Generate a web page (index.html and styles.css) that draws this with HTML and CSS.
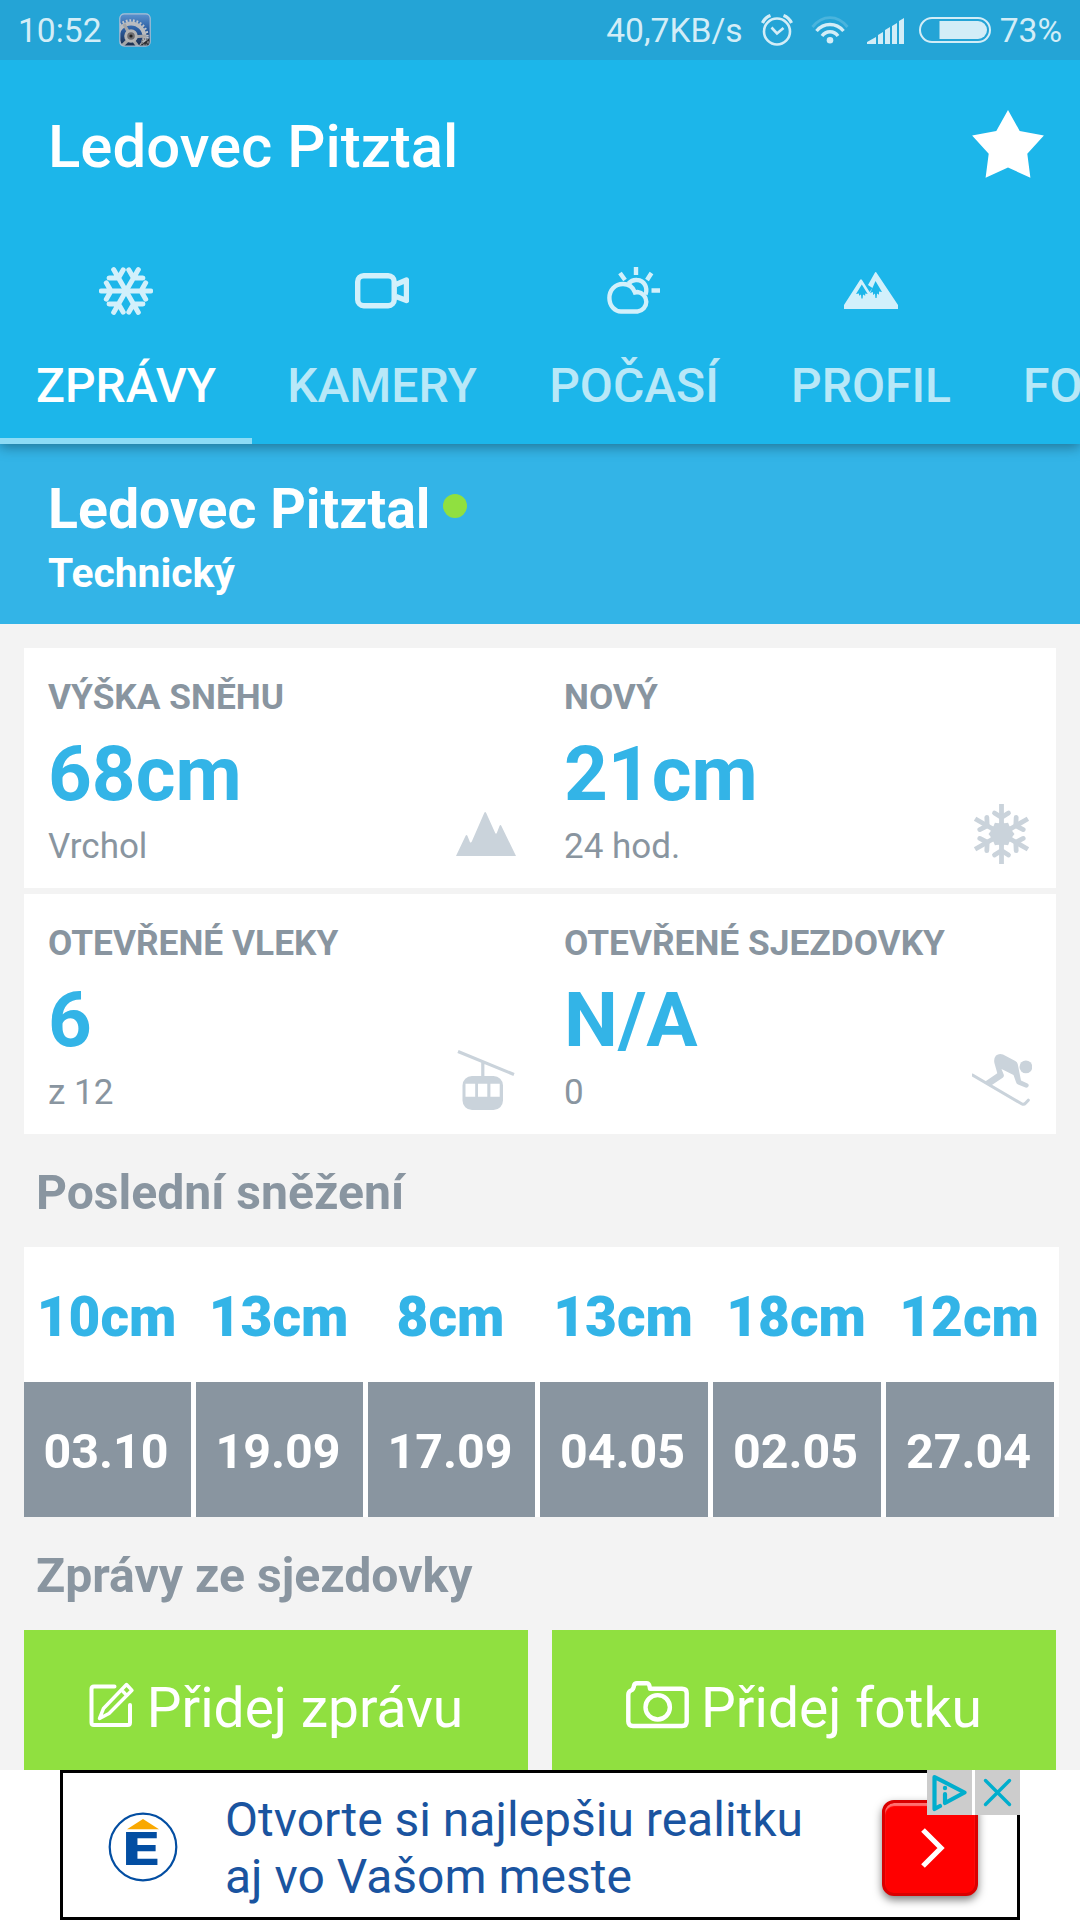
FILE: index.html
```html
<!DOCTYPE html>
<html lang="cs">
<head>
<meta charset="utf-8">
<title>Ledovec Pitztal</title>
<link rel="stylesheet" href="styles.css">
</head>
<body>
<div class="statusbar">
  <span class="clock">10:52</span>
  <svg class="app-badge" width="32" height="34" viewBox="0 0 32 34">
    <defs>
      <linearGradient id="badge" x1="0" y1="0" x2="0" y2="1"><stop offset="0" stop-color="#5c93cf"/><stop offset=".5" stop-color="#2a5ca0"/><stop offset="1" stop-color="#1c2c48"/></linearGradient>
      <clipPath id="badgeClip"><rect x="1" y="1" width="30" height="32" rx="4"/></clipPath>
    </defs>
    <rect x=".8" y=".8" width="30.4" height="32.4" rx="4.500" fill="url(#badge)"/>
    <g clip-path="url(#badgeClip)" fill="none">
      <circle cx="12" cy="24" r="13.500" stroke="#b9bcc0" stroke-width="4"/>
      <circle cx="12" cy="24" r="16.500" stroke="#c3c6ca" stroke-width="2.500" stroke-dasharray="1.800 1.800"/>
      <path d="M12 24L5 11M12 24l15-1M12 24L2 34M12 24l8 11" stroke="#a5a6a8" stroke-width="3.200"/>
      <circle cx="12" cy="23" r="5.300" fill="#6c6c70" stroke="#b4b4b4" stroke-width="3"/>
      <circle cx="12" cy="23" r="1.600" fill="#222"/>
      <path d="M20 33l11-8v8z" fill="#292b30"/><circle cx="26" cy="29" r="3" stroke="#77797c" stroke-width="2" stroke-dasharray="1.500 1"/>
    </g>
    <rect x=".8" y=".8" width="30.400" height="32.400" rx="4.500" fill="none" stroke="#a9bfd6" stroke-width="1.200"/>
  </svg>
  <span class="spacer"></span>
  <span class="speed">40,7KB/s</span>
  <svg class="alarm" width="32" height="32" viewBox="0 0 32 32" fill="none" stroke="currentColor">
    <circle cx="16" cy="17.500" r="13" stroke-width="2.600"/>
    <path d="M10.500 13.500l5.500 6 6.500-5.500" stroke-width="2.600"/>
    <path d="M1.500 9Q4 3.500 9.500 1.500M22.500 1.500Q28 3.500 30.500 9" stroke-width="3.200"/>
  </svg>
  <svg class="wifi" width="38" height="28" viewBox="0 0 38 28" fill="none" stroke="currentColor">
    <path d="M1.500 11Q9 1.700 19 1.700T36.500 11" stroke-width="2.800" opacity=".22"/>
    <path d="M5.500 15Q11 8.500 19 8.500T32.500 15" stroke-width="3.400"/>
    <path d="M11 20Q14 15.700 19 15.700T27 20" stroke-width="3.400"/>
    <circle cx="19" cy="24.300" r="3.300" fill="currentColor" stroke="none"/>
  </svg>
  <svg class="signal" width="37" height="26" viewBox="0 0 37 26" fill="currentColor">
    <path d="M0 24L9 19V26H0zM11 17l5-3V26h-5zM18 12l5-3V26h-5zM25 8l5-3V26h-5zM32 3l5-3V26h-5z"/>
  </svg>
  <svg class="battery" width="72" height="26" viewBox="0 0 72 26">
    <rect x="1" y="1" width="70" height="24" rx="12" fill="none" stroke="currentColor" stroke-width="2"/>
    <path d="M20.500 4H59a9 9 0 0 1 0 18H20.500z" fill="currentColor"/>
  </svg>
  <span class="percent">73%</span>
</div>

<header class="appbar">
  <div class="toolbar">
    <h1>Ledovec Pitztal</h1>
    <svg width="72" height="68" viewBox="0 0 72 68"><path fill="#fff" d="M36 0l11.700 21 24.200 4.500-16.600 18.200 3.100 24L36 57.500 13.600 67.700l3.100-24L.1 25.500 24.300 21z"/></svg>
  </div>
  <nav class="tabs">
    <div class="tab tab-reports active">
      <svg width="54" height="48" viewBox="0 0 54 48" fill="none" stroke="currentColor" stroke-width="5" stroke-linecap="round">
        <g id="flakeAxis"><path d="M2.300 24H51.700M7.300 15.800L12 24l-4.700 8.200M46.700 15.800L42 24l4.700 8.200"/></g>
        <use href="#flakeAxis" transform="rotate(60 27 24)"/><use href="#flakeAxis" transform="rotate(120 27 24)"/>
      </svg>
      <span>ZPRÁVY</span>
    </div>
    <div class="tab tab-cams">
      <svg width="54" height="48" viewBox="0 0 54 48" fill="none" stroke="currentColor" stroke-width="5.400" stroke-linejoin="round">
        <rect x="2.700" y="8.700" width="36.500" height="30" rx="6"/><path d="M41 17.500L51.500 13V33.500L41 29.500"/>
      </svg>
      <span>KAMERY</span>
    </div>
    <div class="tab tab-weather">
      <svg width="54" height="48" viewBox="0 0 54 48" fill="none" stroke="currentColor" stroke-width="4.400">
        <path d="M14 44.500H30.500A9.800 9.800 0 0 0 30.500 25L28 25.500C26 20 21.500 17 16 17 8 17 2.400 23 2.400 31S8 44.500 14 44.500z"/>
        <path d="M21.500 16.500Q25 12.500 30 13C37.500 13.500 41 20.500 38.500 27.500"/>
        <path d="M29 0v8M13 6l5 7M44.500 6l-4.500 7M44.500 23.500H53"/>
      </svg>
      <span>POČASÍ</span>
    </div>
    <div class="tab tab-profile">
      <svg width="54" height="48" viewBox="0 0 54 48">
        <path fill="currentColor" fill-rule="evenodd" d="M0 38L16 13q1-1.500 2 0l7.600 12 2.900-4-4.500-3L30.700 6q1-1.800 2 0L54 38v4H0zM17.800 17.500L12 27l3-.6v2.400l2-1.300.4 4h1.200l.4-4 2.200 1.300v-2.400l2.500.6zM31.500 14L28 22l-2 4 3-1v3l2-1.500.4 4.500h1.200l.4-4.500 2 1.300v-3.300l3 .6z"/>
      </svg>
      <span>PROFIL</span>
    </div>
    <div class="tab tab-photos"><span>FO</span></div>
  </nav>
</header>

<section class="resort">
  <div class="resort-name">Ledovec Pitztal<i class="dot"></i></div>
  <div class="resort-kind">Technický</div>
</section>

<main class="content">
  <div class="card">
    <div class="stat">
      <div><div class="label">VÝŠKA SNĚHU</div><div class="value">68cm</div><div class="note">Vrchol</div></div>
      <svg width="60" height="60" viewBox="0 0 60 60"><path fill="currentColor" d="M0 52L9.500 32q1-2 2 0l2.500 6.300q1 .8 1.800-.8L28.200 9q1-2 2 0l9 20q.8 1.500 1.600 0l2.700-7q.9-2 1.900 0L60 52z"/></svg>
    </div>
    <div class="stat">
      <div><div class="label">NOVÝ</div><div class="value">21cm</div><div class="note">24 hod.</div></div>
      <svg width="60" height="60" viewBox="0 0 60 60" fill="none" stroke="currentColor" stroke-width="4.800">
        <g id="crystalAxis"><path d="M29.500-.5V60.500"/><path stroke-linecap="round" d="M22.500 9l7 4.500 7-4.500M22.500 51l7-4.500 7 4.500"/></g>
        <use href="#crystalAxis" transform="rotate(60 29.500 30)"/><use href="#crystalAxis" transform="rotate(120 29.500 30)"/>
        <path fill="currentColor" stroke="none" d="M42.500 30l-2.300 3 .3 3.500-3 1.200-1.400 3.600-3.600-.5-3 2-3-2-3.600.5-1.400-3.600-3-1.200.3-3.500-2.300-3 2.300-3-.3-3.500 3-1.200 1.400-3.600 3.600.5 3-2 3 2 3.600-.5 1.400 3.600 3 1.200-.3 3.500z"/>
      </svg>
    </div>
  </div>
  <div class="card">
    <div class="stat">
      <div><div class="label">OTEVŘENÉ VLEKY</div><div class="value">6</div><div class="note">z 12</div></div>
      <svg width="60" height="60" viewBox="0 0 60 60" fill="none" stroke="currentColor" stroke-width="3.200">
        <path d="M2 1.500L58 24.500M26.800 12V28"/>
        <path fill="currentColor" fill-rule="evenodd" stroke="none" d="M16 26H37.500a9.500 9.500 0 0 1 9.500 9.500V50.500a9.500 9.500 0 0 1-9.500 9.500H16A9.500 9.500 0 0 1 6.500 50.500V35.500A9.500 9.500 0 0 1 16 26zM9.500 33.700v13h9.700v-13zM22 33.700v13h9.300v-13zM34.400 33.700v13h9.300v-13z"/>
      </svg>
    </div>
    <div class="stat">
      <div><div class="label">OTEVŘENÉ SJEZDOVKY</div><div class="value">N/A</div><div class="note">0</div></div>
      <svg width="60" height="60" viewBox="0 0 60 60">
        <path fill="none" stroke="currentColor" stroke-width="3" stroke-linecap="round" d="M.5 25L50 54q2 1 3.700-1l2.600-2.800"/>
        <circle cx="53.900" cy="16.900" r="6.400" fill="currentColor"/>
        <path fill="currentColor" d="M24 5.500Q27 3 31 4.500L43.300 11q2 1 2.400 3L49 30.500l6.500 3q1.800 1 1 2.800t-3 1.200l-7.500-3q-1.700-1-2-2.500L41.500 25 29.500 19l2.200 5.500q.7 2-1 3.300L18 36.200 12.500 32 25.300 23.300 22.400 13Q21.500 8.500 24 5.500z"/>
      </svg>
    </div>
  </div>

  <h2>Poslední sněžení</h2>
  <div class="snowfall">
    <div class="day"><b>10cm</b><span>03.10</span></div>
    <div class="day"><b>13cm</b><span>19.09</span></div>
    <div class="day"><b>8cm</b><span>17.09</span></div>
    <div class="day"><b>13cm</b><span>04.05</span></div>
    <div class="day"><b>18cm</b><span>02.05</span></div>
    <div class="day"><b>12cm</b><span>27.04</span></div>
  </div>

  <h2>Zprávy ze sjezdovky</h2>
  <div class="actions">
    <div class="action">
      <svg width="46" height="46" viewBox="0 0 46 46" fill="none" stroke="#fff" stroke-linecap="round" stroke-linejoin="round">
        <path stroke-width="4" d="M25.500 4.500H5Q2.500 4.500 2.500 7V40.500Q2.500 43 5 43H38.500Q41 43 41 40.500V23"/>
        <path stroke-width="3.400" d="M10.500 36.500L14.500 26.500 37.500 2.500 43 8.300 20 31.500zM34 9.500l3 3.200"/>
      </svg>
      <span>Přidej zprávu</span>
    </div>
    <div class="action">
      <svg width="63" height="48" viewBox="0 0 63 48" fill="none" stroke="#fff" stroke-width="4.400" stroke-linejoin="round">
        <path d="M5 9.500Q7.500 8.800 8 4.500 8.500 2.300 11 2.300H21Q23.500 2.300 24 7.800H56Q60.700 7.800 60.700 12V40.500Q60.700 45 56 45H7Q2.300 45 2.300 40.500V14Q2.300 10.500 5 9.500z"/><circle cx="31.700" cy="26.300" r="12.200"/>
      </svg>
      <span>Přidej fotku</span>
    </div>
  </div>
</main>

<aside class="ad">
  <div class="ad-frame">
    <svg class="ad-logo" width="70" height="70" viewBox="0 0 70 70">
      <circle cx="35" cy="35" r="33.300" fill="#fff" stroke="#034ea2" stroke-width="2.200"/>
      <path d="M19 17.300L35 7l16 10.300z" fill="#f9a800"/>
      <text class="ad-letter" transform="translate(12.600 52.500) scale(1.360 1)" fill="#034ea2">E</text>
    </svg>
    <p>Otvorte si najlepšiu realitku<br>aj vo Vašom meste</p>
    <div class="ad-go"><svg width="30" height="44" viewBox="0 0 30 44"><path d="M8 4l18 18L8 40" fill="none" stroke="#fff" stroke-width="5.200"/></svg></div>
  </div>
  <div class="ad-controls">
    <svg width="45" height="45" viewBox="0 0 45 45" fill="none" stroke="#00aecd" stroke-width="4.200" stroke-linejoin="round" stroke-linecap="round"><path d="M13 36l-5.500 3V7L37.500 22.500 18 33V24"/><circle cx="18" cy="18" r="2.200" fill="#00aecd" stroke="none"/></svg>
    <svg width="45" height="45" viewBox="0 0 45 45" stroke="#00aecd" stroke-width="3.400" stroke-linecap="round"><path d="M10.500 10.500l24 24M34.500 10.500l-24 24"/></svg>
  </div>
</aside>
</body>
</html>
```
FILE: styles.css
```css
* { box-sizing: border-box; margin: 0; padding: 0; }
body {
  width: 1080px;
  height: 1920px;
  overflow: hidden;
  background: #f3f3f3;
  font-family: Roboto, sans-serif;
  color: #8995a0;
}
svg { display: block; flex: none; }

.statusbar {
  position: relative;
  z-index: 1;
  display: flex;
  align-items: center;
  height: 60px;
  padding: 0 18px;
  background: #24a4d6;
  color: #d3edf7;
  font-size: 33.6px;
  line-height: 60px;
}
.statusbar span { padding-top: 2px; }
.app-badge { margin-left: 17px; }
.spacer { flex: 1; }
.alarm { margin-left: 18px; }
.wifi { margin-left: 18px; }
.signal { margin: 2px 15px 0 18px; }
.percent { margin-left: 9px; }

.appbar {
  position: relative;
  height: 384px;
  background: #1cb6ea;
  color: #fff;
  box-shadow: 0 3px 12px rgba(0, 0, 0, .36);
}
.toolbar {
  display: flex;
  justify-content: space-between;
  align-items: center;
  height: 168px;
  padding: 0 36px 0 48px;
}
.toolbar h1 { padding-top: 5px; font-size: 59.9px; font-weight: 500; line-height: 70px; }
.tabs { display: flex; height: 216px; overflow: hidden; }
.tab {
  display: flex;
  flex: none;
  flex-direction: column;
  align-items: center;
  gap: 43px;
  padding-top: 39px;
  font-size: 48px;
  font-weight: 500;
  line-height: 56px;
}
.tab svg { color: #d2f0fb; }
.tab span { color: rgba(255, 255, 255, .7); }
.tab.active { border-bottom: 6px solid #8ddbf5; }
.tab.active span { color: #fff; }
.tab-reports { width: 252px; }
.tab-cams { width: 260px; }
.tab-weather { width: 244px; }
.tab-profile { width: 230px; }
.tab-photos { padding: 130px 0 0 37px; }

.resort {
  height: 180px;
  padding: 34px 48px 0;
  background: #33b4e7;
  color: #fff;
  font-weight: 700;
}
.resort-name { display: flex; align-items: center; font-size: 55.4px; line-height: 64px; }
.dot { width: 24px; height: 24px; margin: -8px 0 0 12px; border-radius: 50%; background: #90e040; }
.resort-kind { font-size: 40.8px; line-height: 62px; }

.content { height: 1146px; padding: 24px 24px 0; }
.card { display: grid; grid-template: 240px / 1fr 1fr; background: #fff; }
.card + .card { margin-top: 6px; }
.stat { display: flex; justify-content: space-between; padding: 24px; white-space: nowrap; }
.stat svg { align-self: flex-end; color: #cad3db; }
.label { font-size: 35.3px; font-weight: 700; line-height: 50px; }
.value { color: #33b4e7; font-size: 76.4px; font-weight: 700; line-height: 104px; }
.note { font-size: 35px; line-height: 41px; }

h2 { height: 113px; padding: 4px 12px 0; font-size: 48.1px; font-weight: 700; line-height: 109px; }

.snowfall {
  display: grid;
  grid-template-columns: repeat(3, 172px) repeat(3, 173px);
  width: 1035px;
  height: 270px;
  background: #fff;
}
.day { display: grid; grid-template-rows: 135px 135px; padding-right: 5px; text-align: center; font-weight: 700; }
.day b { padding: 6px 2px 0 0; color: #33b4e7; font-size: 55px; line-height: 129px; }
.day span { padding: 4px 3px 0 0; background: #8995a0; color: #fff; font-size: 48.4px; line-height: 131px; }

.actions { display: grid; grid-template-columns: 1fr 1fr; gap: 24px; height: 140px; }
.action {
  display: flex;
  justify-content: center;
  align-items: center;
  gap: 12px;
  padding-top: 16px;
  background: #90e040;
  color: #fff;
  font-size: 55.1px;
  line-height: 64px;
}
.action svg { margin-top: -6px; }

.ad { position: relative; height: 150px; padding: 0 60px; background: #fff; }
.ad-frame {
  display: flex;
  align-items: center;
  height: 150px;
  padding: 3px 39px 0 45px;
  border: 3px solid #000;
}
.ad-letter { font: 700 44.5px "DejaVu Sans", sans-serif; }
.ad-frame p { flex: 1; margin-left: 47px; padding-top: 2px; color: #1a54a0; font-size: 48px; line-height: 57px; white-space: nowrap; }
.ad-go {
  display: flex;
  justify-content: center;
  align-items: center;
  width: 96px;
  height: 96px;
  margin-top: 3px;
  border: 3px solid #d90000;
  border-radius: 12px;
  background: #f00;
  box-shadow: inset 0 3px 1px #ff7070, 0 4px 9px rgba(0, 0, 0, .5);
}
.ad-controls { position: absolute; top: 0; right: 60px; display: flex; gap: 3px; background: #fff; }
.ad-controls svg { background: #ccc; }
```
